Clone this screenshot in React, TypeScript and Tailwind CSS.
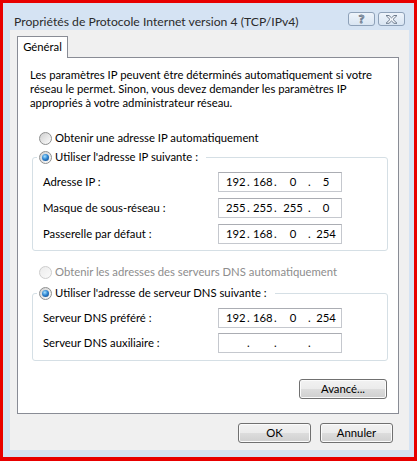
import React from "react";

type RadioProps = { checked?: boolean; disabled?: boolean };

const Radio: React.FC<RadioProps> = ({ checked, disabled }) => (
  <span
    className={`flex h-[13px] w-[13px] shrink-0 items-center justify-center rounded-full border ${
      disabled
        ? "border-[#cdcdcd] bg-[linear-gradient(135deg,#ececec,#fafafa)]"
        : "border-[#8e8f8f] bg-[linear-gradient(135deg,#cfcfcf,#fdfdfd)]"
    }`}
  >
    {checked && (
      <span className="h-[7px] w-[7px] rounded-full bg-[radial-gradient(circle_at_40%_35%,#a8e2ff,#2f86d2_45%,#0d3b78)]" />
    )}
  </span>
);

const IpField: React.FC<{ parts: string[] }> = ({ parts }) => (
  <div className="flex h-[20px] w-[124px] items-center border border-[#c5c8ce] border-t-[#abadb3] bg-white pl-[7px] text-black">
    <span className="w-[18px] text-center">{parts[0]}</span>
    <span className="w-[9px] pl-[3px]">.</span>
    <span className="w-[18px] text-center">{parts[1]}</span>
    <span className="w-[9px] pl-[3px]">.</span>
    <span className="w-[26px] text-center">{parts[2]}</span>
    <span className="w-[8px] pl-[2px]">.</span>
    <span className="w-[24px] text-center">{parts[3]}</span>
  </div>
);

const Button: React.FC<{ label: string; width: string }> = ({ label, width }) => (
  <button
    className={`flex h-[20px] ${width} items-center justify-center rounded-[3px] border border-[#707070] bg-[linear-gradient(#f2f2f2,#ebebeb_50%,#dddddd_50%,#cfcfcf)] text-black shadow-[inset_0_0_0_1px_#fbfbfb]`}
  >
    {label}
  </button>
);

const Row: React.FC<{ label: string; parts: string[] }> = ({ label, parts }) => (
  <div className="flex h-[20px] items-center">
    <span className="w-[175px]">{label}</span>
    <IpField parts={parts} />
  </div>
);

export default function App() {
  return (
    <div className="h-[461px] w-[417px] bg-[#e80000] pt-[3px] pr-[3px] pb-[4px] pl-[3px] font-['Lato','Liberation_Sans',sans-serif] text-[11.3px] leading-[14px] text-black">
      <div className="flex h-full flex-col bg-[#d5e3f3]">
        {/* title bar */}
        <div className="flex h-[27px] shrink-0 items-start justify-between pr-[9px] pl-[11px]">
          <span className="mt-[11px] text-[12.2px] leading-[16px] text-[#2b2b2b]">
            Propriétés de Protocole Internet version 4 (TCP/IPv4)
          </span>
          <div className="mt-[9px] flex gap-[3px]">
            <div className="flex h-[14px] w-[27px] items-center justify-center rounded-[3px] border border-[#8ea1b8] bg-[linear-gradient(#eef4fb,#d9e5f2)]">
              <span className="text-[12px] leading-[12px] font-bold text-transparent [-webkit-text-stroke:1px_#6f7d8f]">?</span>
            </div>
            <div className="flex h-[14px] w-[27px] items-center justify-center rounded-[3px] border border-[#8ea1b8] bg-[linear-gradient(#eef4fb,#d9e5f2)]">
              <svg width="13" height="9" viewBox="0 0 13 9">
                <path
                  d="M1 0.5h3l2.5 2.3 2.5-2.3h3l-4 3.9 4 3.9h-3L6.5 6 4 8.3H1l4-3.9z"
                  fill="#f4f7fb"
                  stroke="#6f7d8f"
                  strokeWidth="1"
                />
              </svg>
            </div>
          </div>
        </div>

        {/* client area */}
        <div className="mr-[5px] mb-[7px] ml-[7px] flex flex-1 flex-col bg-[#f0f0f0] px-[7px] pt-[6px] pb-[7px]">
          <div className="relative z-10 -mb-px flex h-[22px] w-[51px] items-center justify-center border border-b-0 border-[#898c95] bg-white pb-[2px]">
            Général
          </div>
          <div className="flex h-[357px] w-[382px] flex-col border border-[#898c95] bg-white pt-[10px] pb-[14px]">
            <p className="pl-[12px]">
              Les paramètres IP peuvent être déterminés automatiquement si votre
              <br />
              réseau le permet. Sinon, vous devez demander les paramètres IP
              <br />
              appropriés à votre administrateur réseau.
            </p>

            <div className="mt-[20px] flex h-[16px] items-center gap-[3px] pl-[21px]">
              <Radio />
              <span>Obtenir une adresse IP automatiquement</span>
            </div>

            <fieldset className="mt-[3px] ml-[14px] w-[356px] rounded-[3px] border border-[#d5dfe5] pb-[6px]">
              <legend className="ml-[4px] flex h-[16px] items-center gap-[3px] pr-[8px] pl-[2px]">
                <Radio checked />
                <span>Utiliser l'adresse IP suivante :</span>
              </legend>
              <div className="flex flex-col gap-[6px] pt-[7px] pl-[10px]">
                <Row label="Adresse IP :" parts={["192", "168", "0", "5"]} />
                <Row label="Masque de sous-réseau :" parts={["255", "255", "255", "0"]} />
                <Row label="Passerelle par défaut :" parts={["192", "168", "0", "254"]} />
              </div>
            </fieldset>

            <div className="mt-[13px] flex h-[16px] items-center gap-[3px] pl-[21px] text-[#8d8d8d]">
              <Radio disabled />
              <span>Obtenir les adresses des serveurs DNS automatiquement</span>
            </div>

            <fieldset className="mt-[5px] ml-[14px] w-[356px] rounded-[3px] border border-[#d5dfe5] pb-[7px]">
              <legend className="ml-[4px] flex h-[16px] items-center gap-[3px] pr-[8px] pl-[2px]">
                <Radio checked />
                <span>Utiliser l'adresse de serveur DNS suivante :</span>
              </legend>
              <div className="flex flex-col gap-[5px] pt-[7px] pl-[10px]">
                <Row label="Serveur DNS préféré :" parts={["192", "168", "0", "254"]} />
                <Row label="Serveur DNS auxiliaire :" parts={["", "", "", ""]} />
              </div>
            </fieldset>

            <div className="mt-[18px] flex justify-end pr-[11px]">
              <Button label="Avancé..." width="w-[88px]" />
            </div>
          </div>

          <div className="mt-[9px] flex justify-end gap-[9px] pr-[9px]">
            <Button label="OK" width="w-[73px]" />
            <Button label="Annuler" width="w-[73px]" />
          </div>
        </div>
      </div>
    </div>
  );
}
